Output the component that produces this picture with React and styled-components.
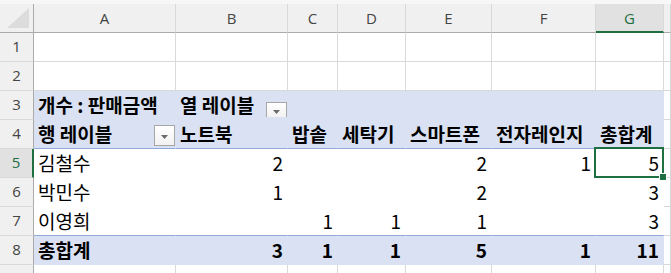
import React from 'react';
import styled, { createGlobalStyle, css } from 'styled-components';

const GlobalStyle = createGlobalStyle`
  html, body {
    margin: 0;
    padding: 0;
    background: #ffffff;
    overflow: hidden;
  }
`;

const PIVOT_BG = '#d9e1f2';
const PIVOT_LINE = '#8eaadb';
const GRID_LINE = '#d9d9d9';
const HEAD_BG = '#f0f0f0';
const HEAD_LINE = '#ababab';
const EXCEL_GREEN = '#1e6f42';

const Sheet = styled.div`
  display: grid;
  grid-template-columns: 34px 142px 112px 50px 68px 86px 104px 68px 1fr;
  grid-template-rows: 4px;
  grid-auto-rows: 29px;
  width: 671px;
  font-family: "Noto Sans CJK KR", "Noto Sans", sans-serif;
`;

const TopStrip = styled.div`
  grid-column: 1 / -1;
  background: #f7f7f7;
`;

const HeadBase = styled.div`
  box-sizing: border-box;
  display: flex;
  align-items: center;
  justify-content: center;
  font-family: "Open Sans", "Noto Sans", sans-serif;
  font-size: 15px;
  color: #444444;
  background: ${HEAD_BG};
`;

const Corner = styled(HeadBase)`
  border-right: 1px solid ${HEAD_LINE};
  border-bottom: 1px solid ${HEAD_LINE};
  justify-content: flex-end;
  align-items: flex-end;
  padding: 0 4px 4px 0;
`;

const ColHeader = styled(HeadBase)`
  border-right: 1px solid ${GRID_LINE};
  border-bottom: 1px solid ${HEAD_LINE};
  ${(p) =>
    p.$selected &&
    css`
      background: #e1e1e1;
      color: ${EXCEL_GREEN};
      border-bottom: 2px solid ${EXCEL_GREEN};
    `}
`;

const RowHeader = styled(HeadBase)`
  border-right: 1px solid ${HEAD_LINE};
  border-bottom: 1px solid ${GRID_LINE};
  padding-bottom: 2px;
  ${(p) =>
    p.$selected &&
    css`
      background: #e1e1e1;
      color: ${EXCEL_GREEN};
      border-right: 2px solid ${EXCEL_GREEN};
    `}
`;

const Cell = styled.div`
  position: relative;
  box-sizing: border-box;
  display: flex;
  align-items: center;
  justify-content: ${(p) => (p.$num ? 'flex-end' : 'flex-start')};
  padding: ${(p) => (p.$num ? '0 4px 2px 0' : '0 0 2px 4px')};
  font-size: 19px;
  line-height: 1;
  font-weight: ${(p) => (p.$bold ? 700 : 400)};
  color: #000000;
  white-space: nowrap;
  background: ${(p) => (p.$pivot ? PIVOT_BG : '#ffffff')};
  border-right: 1px solid ${(p) => (p.$inPivot ? 'transparent' : GRID_LINE)};
  border-bottom: 1px solid ${(p) => (p.$inPivot ? 'transparent' : GRID_LINE)};
  ${(p) =>
    p.$lineBelow &&
    css`
      border-bottom-color: ${PIVOT_LINE};
    `}
  ${(p) =>
    p.$lineAbove &&
    css`
      border-top: 1px solid ${PIVOT_LINE};
      margin-top: -1px;
    `}
  ${(p) =>
    p.$withFilter &&
    css`
      justify-content: space-between;
      padding-right: 0;
    `}
`;

const FilterButton = styled.span`
  box-sizing: border-box;
  align-self: flex-end;
  width: 21px;
  height: ${(p) => p.$h}px;
  border: 1px solid #a6a6a6;
  border-bottom-width: ${(p) => (p.$open ? 0 : 1)}px;
  background: linear-gradient(#ffffff, #f2f2f2);
  display: flex;
  align-items: center;
  justify-content: center;
  padding-top: 3px;
`;

const SelectionBox = styled.span`
  position: absolute;
  top: -2px;
  left: -2px;
  right: -1px;
  bottom: -1px;
  border: 2px solid ${EXCEL_GREEN};
  z-index: 2;
  pointer-events: none;
`;

const FillHandle = styled.span`
  position: absolute;
  right: -5px;
  bottom: -5px;
  width: 6px;
  height: 6px;
  background: ${EXCEL_GREEN};
  border: 1px solid #ffffff;
  z-index: 3;
`;

const Caret = () => (
  <svg width="7" height="4" viewBox="0 0 7 4">
    <path d="M0 0h7L3.5 4z" fill="#6b6b6b" />
  </svg>
);

const CornerMark = () => (
  <svg width="22" height="20" viewBox="0 0 22 20">
    <path d="M22 0V20H0z" fill="#dcdcdc" />
  </svg>
);

const columns = ['A', 'B', 'C', 'D', 'E', 'F', 'G', ''];

// pivot table rows: A..G, numbers right aligned
const bodyRows = [
  { n: 5, cells: ['김철수', 2, '', '', 2, 1, 5] },
  { n: 6, cells: ['박민수', 1, '', '', 2, '', 3] },
  { n: 7, cells: ['이영희', '', 1, 1, 1, '', 3] },
];

const headerLabels = ['노트북', '밥솥', '세탁기', '스마트폰', '전자레인지', '총합계'];
const totals = [3, 1, 1, 5, 1, 11];

function EmptyRow({ n }) {
  return (
    <>
      <RowHeader>{n}</RowHeader>
      {columns.map((c, i) => (
        <Cell key={i} />
      ))}
    </>
  );
}

export default function App() {
  return (
    <>
      <GlobalStyle />
      <Sheet>
        <TopStrip />
        <Corner>
          <CornerMark />
        </Corner>
        {columns.map((c, i) => (
          <ColHeader key={i} $selected={c === 'G'}>
            {c}
          </ColHeader>
        ))}

        <EmptyRow n={1} />
        <EmptyRow n={2} />

        <RowHeader>3</RowHeader>
        <Cell $pivot $inPivot $bold>
          개수 : 판매금액
        </Cell>
        <Cell $pivot $inPivot $bold $withFilter>
          열 레이블
          <FilterButton $h={15} $open>
            <Caret />
          </FilterButton>
        </Cell>
        {[0, 1, 2, 3, 4].map((i) => (
          <Cell key={i} $pivot $inPivot />
        ))}
        <Cell />

        <RowHeader>4</RowHeader>
        <Cell $pivot $inPivot $bold $withFilter $lineBelow>
          행 레이블
          <FilterButton $h={21}>
            <Caret />
          </FilterButton>
        </Cell>
        {headerLabels.map((t) => (
          <Cell key={t} $pivot $inPivot $bold $lineBelow>
            {t}
          </Cell>
        ))}
        <Cell />

        {bodyRows.map((r) => (
          <React.Fragment key={r.n}>
            <RowHeader $selected={r.n === 5}>{r.n}</RowHeader>
            {r.cells.map((v, i) => (
              <Cell key={i} $inPivot $num={i > 0}>
                {v}
                {r.n === 5 && i === 6 && (
                  <SelectionBox>
                    <FillHandle />
                  </SelectionBox>
                )}
              </Cell>
            ))}
            <Cell />
          </React.Fragment>
        ))}

        <RowHeader>8</RowHeader>
        <Cell $pivot $inPivot $bold $lineAbove>
          총합계
        </Cell>
        {totals.map((v, i) => (
          <Cell key={i} $pivot $inPivot $bold $num $lineAbove>
            {v}
          </Cell>
        ))}
        <Cell />

        {/* row 9 sits below the fold, only its top edge shows */}
        <EmptyRow n="" />
      </Sheet>
    </>
  );
}
